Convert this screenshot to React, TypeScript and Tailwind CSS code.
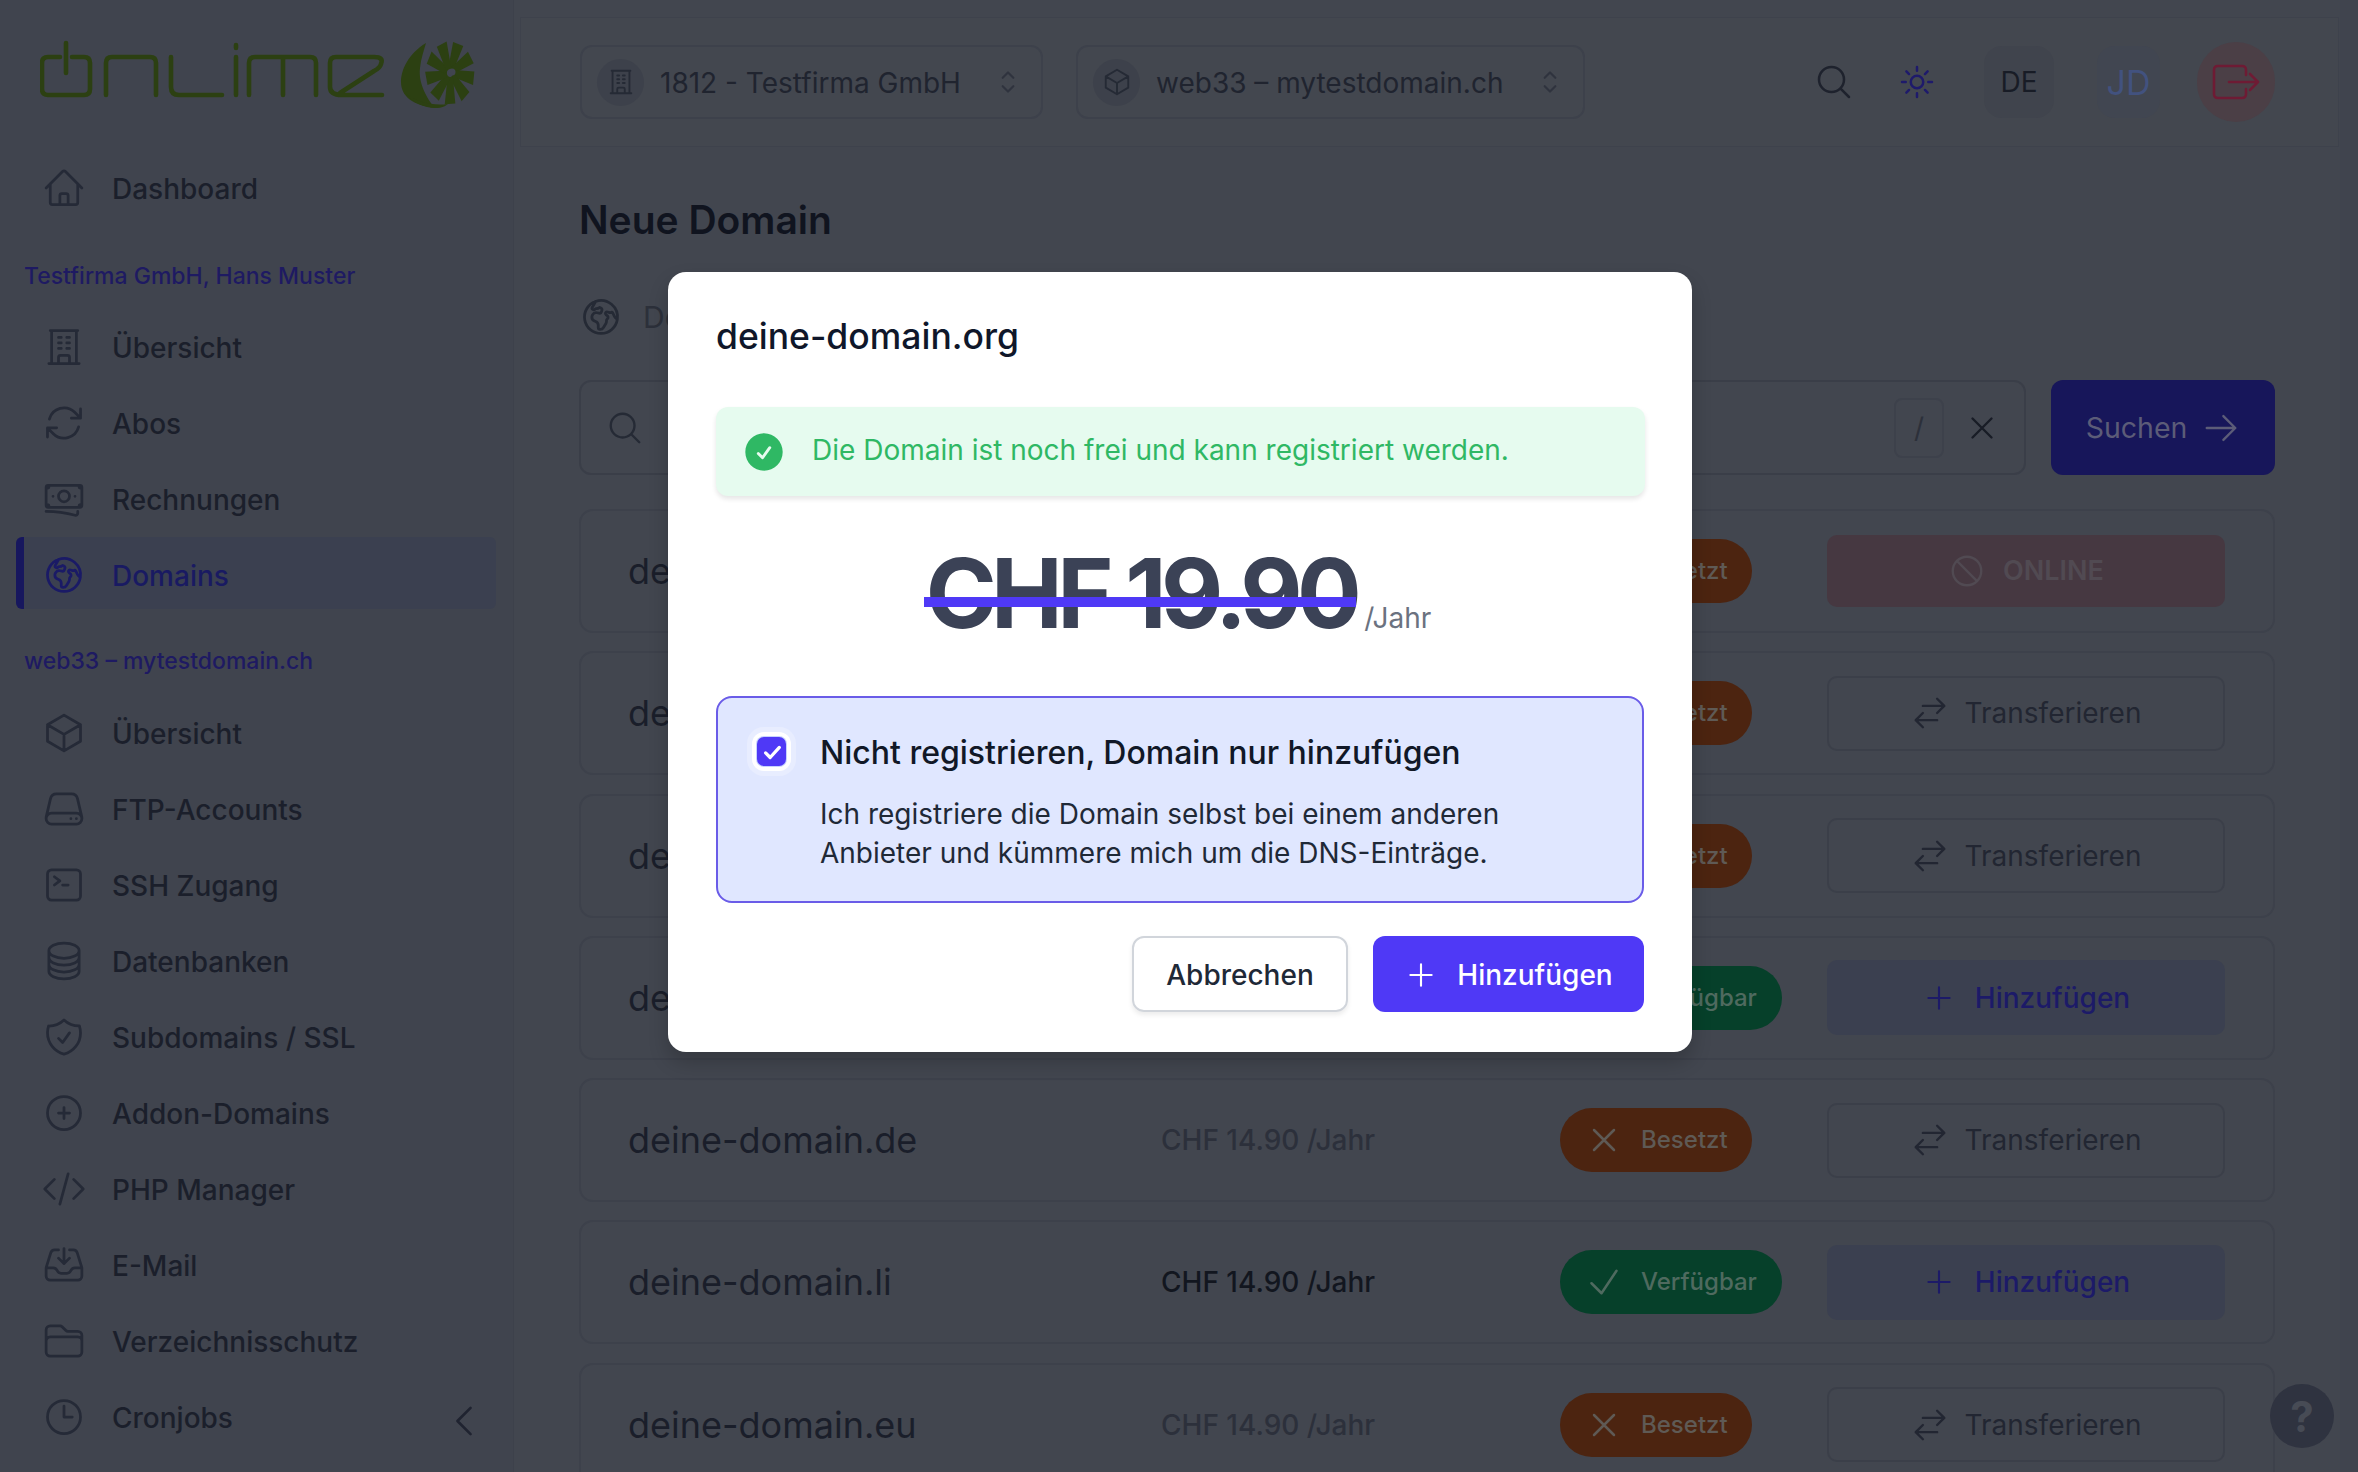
import React from "react";
import {
  HiOutlineHome, HiOutlineBuildingOffice, HiOutlineArrowPath, HiOutlineBanknotes, HiOutlineGlobeEuropeAfrica,
  HiOutlineCube, HiOutlineServer, HiOutlineCommandLine, HiOutlineCircleStack, HiOutlineShieldCheck,
  HiOutlinePlusCircle, HiOutlineCodeBracket, HiOutlineInboxArrowDown, HiOutlineFolder, HiOutlineClock,
  HiOutlineChevronLeft, HiOutlineChevronUpDown, HiOutlineMagnifyingGlass, HiOutlineSun,
  HiOutlineXMark, HiOutlineArrowRight, HiOutlineNoSymbol,
  HiOutlineArrowsRightLeft, HiOutlinePlus, HiOutlineCheck, HiCheckCircle,
} from "react-icons/hi2";

function Logo() {
  const blades = [0, 40, 80, 120, 160, 200, 240, 280, 320];
  return (
    <svg viewBox="0 0 436 70" className="w-[436px] h-[70px]" fill="none">
      <g stroke="#2c4012" strokeWidth="4.6" strokeLinecap="round" strokeLinejoin="round">
        <path d="M20 17 H8 Q2 17 2 23 V49 Q2 55 8 55 H44 Q50 55 50 49 V23 Q50 17 44 17 H32" />
        <path d="M26 3 V33" />
        <path d="M66 55 V23 Q66 17 72 17 H110 Q116 17 116 23 V55" />
        <path d="M131 17 V47 Q131 55 139 55 H182" />
        <path d="M196 17 V55 M196 5 V8" />
        <path d="M209 55 V23 Q209 17 215 17 H270 Q276 17 276 23 V55 M243 17 V55" />
        <path d="M342 55 H302 Q290 55 290 47 V23 Q290 17 296 17 H334 Q344 17 341 24 Q340 28 334 31 L300 53" />
      </g>
      <path d="M386 3 C368 14 361 30 361 42 C361 56 372 65 395 68 C388 60 378 44 380 28 C381 18 384 10 386 3 Z" fill="#2c4012" />
      <path d="M366 54 C372 62 385 68 395 68 C403 68 405 66 408 64 C392 66 378 62 366 54 Z" fill="#2c4012" />
      <g fill="#2c4012" transform="translate(410 33) scale(0.78 1) translate(-410 -33)">
        {blades.map((a) => (
          <path key={a} d="M408 27 L414 2 L427 6 L414 31 Z" transform={`rotate(${a} 410 33)`} />
        ))}
      </g>
      <circle cx="412" cy="32" r="3.5" fill="#41454f" />
    </svg>
  );
}

type IconT = React.ComponentType<{ className?: string }>;

function NavItem({ icon: Icon, label, active }: { icon: IconT; label: string; active?: boolean }) {
  return (
    <div className="relative h-[76px] ml-[16px] mr-[17px] flex items-center">
      {active && <div className="absolute left-0 right-0 top-0 bottom-[4px] rounded-[6px] bg-[#3b4050] border-l-[8px] border-[#17175e]" />}
      <div className="relative w-[96px] flex justify-center">
        <Icon className={`w-[44px] h-[44px] ${active ? "text-[#1a1a66]" : "text-[#252a37]"}`} />
      </div>
      <span className={`relative pt-[1px] text-[28px] font-medium ${active ? "text-[#191a62]" : "text-[#1b1f2b]"}`}>{label}</span>
    </div>
  );
}

function Sidebar() {
  return (
    <aside className="relative w-[514px] shrink-0 h-full bg-[#40444e] border-r border-[#3d414b] overflow-hidden">
      <div className="pt-[40px] pl-[40px] h-[150px]">
        <Logo />
      </div>
      <NavItem icon={HiOutlineHome} label="Dashboard" />
      <div className="h-[83px] pt-[17px] pl-[24px] flex items-center text-[23px] font-medium text-[#1e1a62]">Testfirma GmbH, Hans Muster</div>
      <NavItem icon={HiOutlineBuildingOffice} label="Übersicht" />
      <NavItem icon={HiOutlineArrowPath} label="Abos" />
      <NavItem icon={HiOutlineBanknotes} label="Rechnungen" />
      <NavItem icon={HiOutlineGlobeEuropeAfrica} label="Domains" active />
      <div className="h-[82px] pt-[14px] pl-[24px] flex items-center text-[23px] font-medium text-[#1e1a62]">web33 – mytestdomain.ch</div>
      <NavItem icon={HiOutlineCube} label="Übersicht" />
      <NavItem icon={HiOutlineServer} label="FTP-Accounts" />
      <NavItem icon={HiOutlineCommandLine} label="SSH Zugang" />
      <NavItem icon={HiOutlineCircleStack} label="Datenbanken" />
      <NavItem icon={HiOutlineShieldCheck} label="Subdomains / SSL" />
      <NavItem icon={HiOutlinePlusCircle} label="Addon-Domains" />
      <NavItem icon={HiOutlineCodeBracket} label="PHP Manager" />
      <NavItem icon={HiOutlineInboxArrowDown} label="E-Mail" />
      <NavItem icon={HiOutlineFolder} label="Verzeichnisschutz" />
      <NavItem icon={HiOutlineClock} label="Cronjobs" />
      <HiOutlineChevronLeft className="absolute left-[443px] top-[1400px] w-[42px] h-[42px] text-[#1f2330]" />
    </aside>
  );
}

function Selector({ icon: Icon, label, w }: { icon: IconT; label: string; w: string }) {
  return (
    <div className={`${w} h-[74px] rounded-[12px] border-2 border-[#3d414b] flex items-center pl-[15px] pr-[16px]`}>
      <div className="w-[47px] h-[47px] rounded-full bg-[#3d414b] flex items-center justify-center shrink-0">
        <Icon className="w-[30px] h-[30px] text-[#252a35]" />
      </div>
      <span className="ml-[16px] pt-[2px] flex-1 text-[28px] text-[#20242f] whitespace-nowrap">{label}</span>
      <HiOutlineChevronUpDown className="w-[34px] h-[34px] text-[#2f333e]" />
    </div>
  );
}

function LogoutIcon() {
  return (
    <svg viewBox="0 0 48 36" className="w-[48px] h-[36px]" fill="none" stroke="#6e1b34" strokeWidth="2.6" strokeLinecap="round" strokeLinejoin="round">
      <path d="M34 11 V6 Q34 2 30 2 H6 Q2 2 2 6 V30 Q2 34 6 34 H30 Q34 34 34 30 V25" />
      <path d="M17 18 H46 M38 10 L46 18 L38 26" />
    </svg>
  );
}

function Header() {
  return (
    <header className="mt-[17px] ml-[6px] mr-[1px] h-[130px] border border-[#3e424c] bg-[#43474f] flex items-center pl-[59px] pr-[63px]">
      <Selector icon={HiOutlineBuildingOffice} label="1812 - Testfirma GmbH" w="w-[463px]" />
      <div className="w-[33px]" />
      <Selector icon={HiOutlineCube} label="web33 – mytestdomain.ch" w="w-[509px]" />
      <div className="flex-1" />
      <HiOutlineMagnifyingGlass className="w-[40px] h-[40px] text-[#1e222d]" />
      <HiOutlineSun className="ml-[43px] w-[40px] h-[40px] text-[#1e1a6b]" />
      <div className="ml-[47px] w-[70px] h-[72px] rounded-[18px] bg-[#40444d] flex items-center justify-center text-[28px] text-[#181c26]">DE</div>
      <div className="ml-[43px] w-[63px] h-[72px] rounded-[18px] bg-[#414651] flex items-center justify-center text-[34px] text-[#42527f]">JD</div>
      <div className="ml-[37px] w-[78px] h-[80px] rounded-full bg-[#4b3f46] flex items-center justify-center">
        <LogoutIcon />
      </div>
    </header>
  );
}

function Row({ name, free, online }: { name: string; free?: boolean; online?: boolean }) {
  return (
    <div className="h-[124px] shrink-0 rounded-[14px] border-2 border-[#3d414b] bg-[#42464f] flex items-center pl-[47px]">
      <div className="w-[533px] text-[36px] text-[#1a1e2a] whitespace-nowrap">{name}</div>
      <div className={`w-[399px] text-[28px] font-medium whitespace-nowrap ${free ? "text-[#12161f]" : "text-[#2c303b]"}`}>CHF 14.90 /Jahr</div>
      <div className="w-[267px]">
        {free ? (
          <div className="w-[222px] h-[64px] rounded-full bg-[#06402a] flex items-center pl-[24px] text-[#4f6a5f]">
            <HiOutlineCheck className="w-[40px] h-[40px]" />
            <span className="ml-[17px] text-[24px] font-medium">Verfügbar</span>
          </div>
        ) : (
          <div className="w-[192px] h-[64px] rounded-full bg-[#4c2410] flex items-center pl-[24px] text-[#5f5a55]">
            <HiOutlineXMark className="w-[40px] h-[40px]" />
            <span className="ml-[17px] text-[24px] font-medium">Besetzt</span>
          </div>
        )}
      </div>
      {online ? (
        <div className="w-[398px] h-[72px] rounded-[10px] bg-[#463841] flex items-center justify-center text-[#514a52]">
          <HiOutlineNoSymbol className="w-[38px] h-[38px]" />
          <span className="ml-[17px] text-[27px] font-semibold">ONLINE</span>
        </div>
      ) : free ? (
        <div className="w-[398px] h-[75px] rounded-[10px] bg-[#3b4050] flex items-center justify-center text-[#1c1a68]">
          <HiOutlinePlus className="w-[34px] h-[34px]" />
          <span className="ml-[19px] text-[28px] font-medium">Hinzufügen</span>
        </div>
      ) : (
        <div className="w-[398px] h-[75px] rounded-[10px] border-2 border-[#3b3f49] flex items-center justify-center text-[#222632]">
          <HiOutlineArrowsRightLeft className="w-[38px] h-[38px]" />
          <span className="ml-[16px] text-[28px]">Transferieren</span>
        </div>
      )}
    </div>
  );
}

function Main() {
  return (
    <main className="w-[1826px] shrink-0 h-full overflow-hidden bg-[#42464f]">
      <Header />
      <div className="pl-[59px] pr-[65px] ml-[6px]">
        <h1 className="mt-[48px] h-[50px] flex items-center text-[39px] font-semibold text-[#10141f]">Neue Domain</h1>
        <div className="mt-[51px] h-[42px] flex items-center">
          <HiOutlineGlobeEuropeAfrica className="w-[44px] h-[44px] text-[#252a35]" />
          <span className="ml-[20px] text-[30px] text-[#2c303a] whitespace-nowrap">Domain suchen</span>
        </div>
        <div className="mt-[42px] flex gap-[25px]">
          <div className="w-[1447px] h-[95px] rounded-[12px] border-2 border-[#3a3e48] flex items-center pl-[25px] pr-[23px]">
            <HiOutlineMagnifyingGlass className="w-[38px] h-[38px] text-[#252a35]" />
            <div className="flex-1" />
            <div className="w-[50px] h-[60px] rounded-[8px] border-2 border-[#3d414b] flex items-center justify-center text-[28px] text-[#2c303a]">/</div>
            <HiOutlineXMark className="ml-[19px] w-[38px] h-[38px] text-[#181c26]" />
          </div>
          <div className="w-[224px] h-[95px] rounded-[12px] bg-[#17165a] flex items-center justify-center text-[#5c5c78]">
            <span className="pt-[2px] text-[28.5px]">Suchen</span>
            <HiOutlineArrowRight className="ml-[15px] w-[38px] h-[38px]" />
          </div>
        </div>
        <div className="mt-[34px] flex flex-col gap-[18.3px]">
          <Row name="deine-domain.ch" online />
          <Row name="deine-domain.com" />
          <Row name="deine-domain.net" />
          <Row name="deine-domain.org" free />
          <Row name="deine-domain.de" />
          <Row name="deine-domain.li" free />
          <Row name="deine-domain.eu" />
        </div>
      </div>
    </main>
  );
}

function Modal() {
  return (
    <div className="absolute left-[668px] top-[272px] w-[1024px] h-[780px] rounded-[18px] bg-white px-[48px] pt-[44px] shadow-[0_10px_20px_rgba(0,0,0,0.2)]">
      <h2 className="h-[42px] flex items-center text-[35.5px] font-medium text-[#0f172a]">deine-domain.org</h2>
      <div className="mt-[49px] h-[89px] w-[929px] rounded-[12px] bg-[#e6fbef] shadow-[0_3px_5px_rgba(0,0,0,0.1)] flex items-center pl-[25px]">
        <HiCheckCircle className="w-[46px] h-[46px] text-[#2fb864]" />
        <span className="ml-[25px] mb-[3px] text-[28px] text-[#2fb864]">Die Domain ist noch frei und kann registriert werden.</span>
      </div>
      <div className="mt-[49px] h-[96px] pr-[3px] flex items-baseline justify-center gap-[8px]">
        <span className="relative text-[96px] leading-[96px] font-bold tracking-[-0.058em] text-[#3b4256]">
          CHF 19.90
          <span className="absolute left-[-2px] right-0 top-[52px] h-[10px] bg-[#4f39f6]" />
        </span>
        <span className="text-[28px] text-[#6b7280]">/Jahr</span>
      </div>
      <div className="mt-[55px] h-[207px] w-[928px] rounded-[16px] border-2 border-[#6a5ce8] bg-[#e0e7ff] pl-[39px] pt-[35px] flex">
        <div className="mt-[4px] w-[29px] h-[29px] rounded-[7px] bg-[#4f39f6] shadow-[0_0_0_1px_#c7d2fe,0_0_0_5px_#ffffff,0_0_0_10px_#e8edff] flex items-center justify-center shrink-0">
          <svg viewBox="0 0 24 24" className="w-[22px] h-[22px]" fill="none" stroke="#ffffff" strokeWidth="3.6" strokeLinecap="round" strokeLinejoin="round">
            <path d="M5 13 L10 18 L20 7" />
          </svg>
        </div>
        <div className="ml-[34px]">
          <div className="h-[40px] flex items-center text-[32px] font-medium text-[#111827]">Nicht registrieren, Domain nur hinzufügen</div>
          <p className="mt-[22px] text-[28px] leading-[39px] text-[#1f2937]">
            Ich registriere die Domain selbst bei einem anderen
            <br />
            Anbieter und kümmere mich um die DNS-Einträge.
          </p>
        </div>
      </div>
      <div className="mt-[33px] w-[928px] flex justify-end gap-[25px]">
        <div className="w-[216px] h-[76px] pt-[2px] rounded-[12px] border-2 border-[#d1d5db] shadow-[0_3px_5px_rgba(0,0,0,0.08)] flex items-center justify-center text-[28px] font-medium text-[#1f2937]">Abbrechen</div>
        <div className="w-[271px] h-[76px] pt-[2px] rounded-[12px] bg-[#4f39f6] flex items-center justify-center text-[28px] font-medium text-white">
          <HiOutlinePlus className="w-[34px] h-[34px]" />
          <span className="ml-[19px]">Hinzufügen</span>
        </div>
      </div>
    </div>
  );
}

export default function App() {
  return (
    <div className="relative w-[2358px] h-[1472px] overflow-hidden flex font-['Inter',sans-serif] bg-[#40444e]">
      <Sidebar />
      <Main />
      <div className="flex-1 bg-[#40444e]" />
      <Modal />
      <div className="absolute left-[2270px] top-[1384px] w-[64px] h-[64px] rounded-full bg-[#2f3340] flex items-center justify-center text-[42px] font-bold text-[#474b55]">?</div>
    </div>
  );
}
